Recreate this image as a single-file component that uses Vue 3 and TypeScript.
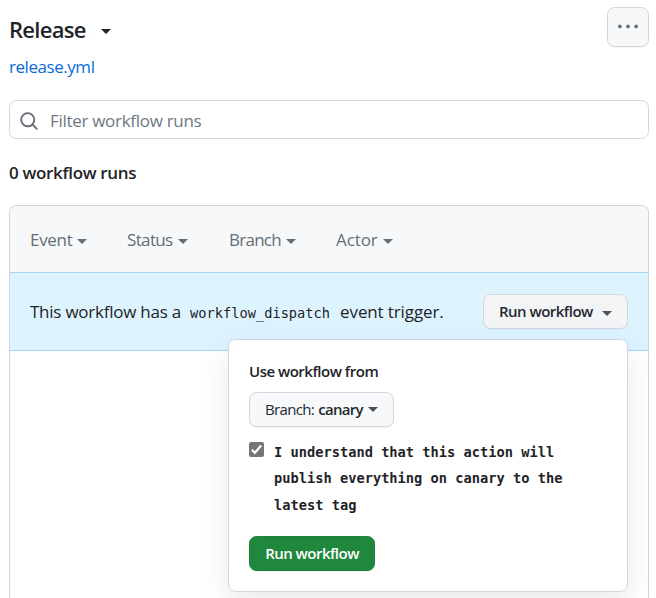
<script setup lang="ts">
import { ref } from 'vue'

const filters = ['Event', 'Status', 'Branch', 'Actor']
const confirmed = ref(true)
</script>

<template>
  <main class="page">
    <header class="head">
      <div>
        <h1 class="title">Release<i class="caret"></i></h1>
        <a class="file">release.yml</a>
      </div>
      <button class="btn more" aria-label="Show workflow options">
        <svg width="20" height="20" viewBox="0 0 16 16" fill="currentColor">
          <path d="M8 9a1.5 1.5 0 1 0 0-3 1.5 1.5 0 0 0 0 3ZM1.5 9a1.5 1.5 0 1 0 0-3 1.5 1.5 0 0 0 0 3Zm13 0a1.5 1.5 0 1 0 0-3 1.5 1.5 0 0 0 0 3Z" />
        </svg>
      </button>
    </header>

    <div class="search">
      <svg width="20" height="20" viewBox="0 0 16 16" fill="currentColor">
        <path d="M10.68 11.74a6 6 0 0 1-7.922-8.982 6 6 0 0 1 8.982 7.922l3.04 3.04a.749.749 0 0 1-.326 1.275.749.749 0 0 1-.734-.215ZM11.5 7a4.499 4.499 0 1 0-8.997 0A4.499 4.499 0 0 0 11.5 7Z" />
      </svg>
      <span>Filter workflow runs</span>
    </div>

    <h2 class="count">0 workflow runs</h2>

    <section class="box">
      <nav class="filters">
        <span v-for="f in filters" :key="f" class="filter" :class="f.toLowerCase()">
          <span>{{ f }}</span><i class="caret"></i>
        </span>
      </nav>
      <div class="banner">
        <p class="notice"><span class="lead">This workflow has a</span><code>workflow_dispatch</code><span class="trail">event trigger.</span></p>
        <div class="dispatch">
          <button class="btn run"><span>Run workflow</span><i class="caret"></i></button>
          <div class="popover">
            <p class="label">Use workflow from</p>
            <button class="btn branch-btn"><span class="key">Branch:</span><b>canary</b><i class="caret"></i></button>
            <label class="confirm">
              <input v-model="confirmed" type="checkbox" />
              <span class="check">
                <svg v-if="confirmed" width="15" height="15" viewBox="0 0 15 15" fill="none" stroke="#fff" stroke-width="2.2">
                  <path d="M2.8 7.8 5.8 10.8 12.2 3.6" />
                </svg>
              </span>
              <span class="statement">I understand that this action will publish everything on canary to the latest tag</span>
            </label>
            <button class="btn primary"><span>Run workflow</span></button>
          </div>
        </div>
      </div>
    </section>
  </main>
</template>

<style>
body {
  background: #fff;
  overflow: hidden;
}
</style>

<style scoped>
* {
  box-sizing: border-box;
}
.page {
  height: 598px;
  padding: 7px 7px 0 9px;
  display: flex;
  flex-direction: column;
  overflow: hidden;
  color: #1f2328;
  font-family: "Open Sans", "Noto Sans", sans-serif;
  font-size: 17px;
  line-height: 26px;
  white-space: nowrap;
}
h1, h2, p {
  margin: 0;
}
.caret {
  display: inline-block;
  flex: none;
  width: 0;
  height: 0;
  border: 5px solid transparent;
  border-top-color: currentColor;
  border-bottom: 0;
}
.head {
  display: flex;
  justify-content: space-between;
  height: 93px;
}
.title {
  display: flex;
  align-items: center;
  gap: 15px;
  height: 44px;
  font-size: 22px;
  font-weight: 600;
  letter-spacing: -0.7px;
}
.title .caret {
  margin-top: 4px;
}
.file {
  display: block;
  margin-top: 3px;
  color: #0969da;
  letter-spacing: -0.45px;
}
.btn {
  display: flex;
  align-items: center;
  height: 35px;
  padding: 0 15px 2px;
  border: 1px solid #d3d7dc;
  border-radius: 7.5px;
  background: #f6f8fa;
  box-shadow: 0 1px 0 rgba(31, 35, 40, 0.04);
  color: #24292f;
  font: 600 15px/20px "Open Sans", "Noto Sans", sans-serif;
  letter-spacing: -0.52px;
}
.more {
  justify-content: center;
  width: 42px;
  height: 40px;
  padding: 0;
  color: #656d76;
}
.search {
  display: flex;
  align-items: center;
  gap: 11px;
  height: 39px;
  padding-left: 9px;
  border: 1px solid #d0d7de;
  border-radius: 7.5px;
  color: #6e7781;
  letter-spacing: -0.3px;
}
.search svg {
  margin-top: 3px;
  color: #656d76;
}
.search span {
  padding-top: 2px;
}
.count {
  margin-top: 21px;
  font-size: 17px;
  line-height: 26px;
  font-weight: 600;
  letter-spacing: -0.33px;
}
.box {
  flex: 1;
  margin-top: 19px;
  border: 1px solid #d0d7de;
  border-bottom: 0;
  border-radius: 7.5px 7.5px 0 0;
}
.filters {
  display: flex;
  align-items: center;
  height: 66px;
  padding-left: 20px;
  background: #f6f8fa;
  border-radius: 7px 7px 0 0;
  color: #656d76;
  letter-spacing: -0.3px;
}
.filter {
  display: flex;
  align-items: center;
  gap: 5px;
  padding-top: 2px;
}
.filter .caret {
  margin-top: 2px;
}
.event {
  width: 97px;
}
.status {
  width: 102px;
  letter-spacing: -0.65px;
}
.branch {
  width: 107px;
  letter-spacing: -0.75px;
}
.actor {
  letter-spacing: -0.1px;
}
.banner {
  display: flex;
  align-items: center;
  justify-content: space-between;
  height: 79px;
  padding: 0 20px;
  background: #ddf4ff;
  border: solid #a0d8fc;
  border-width: 1px 0;
}
.notice {
  display: flex;
  align-items: baseline;
  padding-top: 2px;
}
.lead {
  letter-spacing: -0.24px;
}
.trail {
  letter-spacing: -0.12px;
}
code {
  margin: 0 10px 0 9px;
  font-family: "DejaVu Sans Mono", monospace;
  font-size: 13.7px;
}
.dispatch {
  position: relative;
}
.run {
  width: 145px;
  justify-content: space-between;
  background: #f3f4f6;
}
.run .caret {
  margin-top: 5px;
  color: #4c5157;
}
.popover {
  position: absolute;
  top: 45px;
  right: 0;
  width: 400px;
  height: 253px;
  padding: 18px 20px;
  border: 1px solid #d0d7de;
  border-radius: 7.5px;
  background: #fff;
  box-shadow: 0 10px 30px rgba(140, 149, 159, 0.2);
}
.label {
  height: 34px;
  font-size: 15px;
  font-weight: 600;
  letter-spacing: -0.5px;
}
.branch-btn {
  width: 145px;
}
.branch-btn .key {
  font-weight: 400;
  letter-spacing: -0.65px;
}
.branch-btn b {
  margin: 0 5px 0 4px;
  font-weight: 600;
  letter-spacing: -0.7px;
}
.branch-btn .caret {
  margin-top: 1px;
  color: #4c5157;
}
.confirm {
  display: flex;
  height: 79px;
  margin-top: 12px;
}
.confirm input {
  position: absolute;
  opacity: 0;
}
.check {
  flex: none;
  width: 15px;
  height: 15px;
  margin: 3px 10px 0 0;
  border-radius: 2px;
  background: #767676;
}
.check svg {
  display: block;
}
.statement {
  width: 300px;
  white-space: normal;
  font: 700 13.7px/26.4px "DejaVu Sans Mono", monospace;
}
.primary {
  justify-content: center;
  width: 126px;
  margin-top: 18px;
  padding: 0 0 2px;
  border-color: #1f7f39;
  background: #1f883d;
  color: #fff;
}
</style>
